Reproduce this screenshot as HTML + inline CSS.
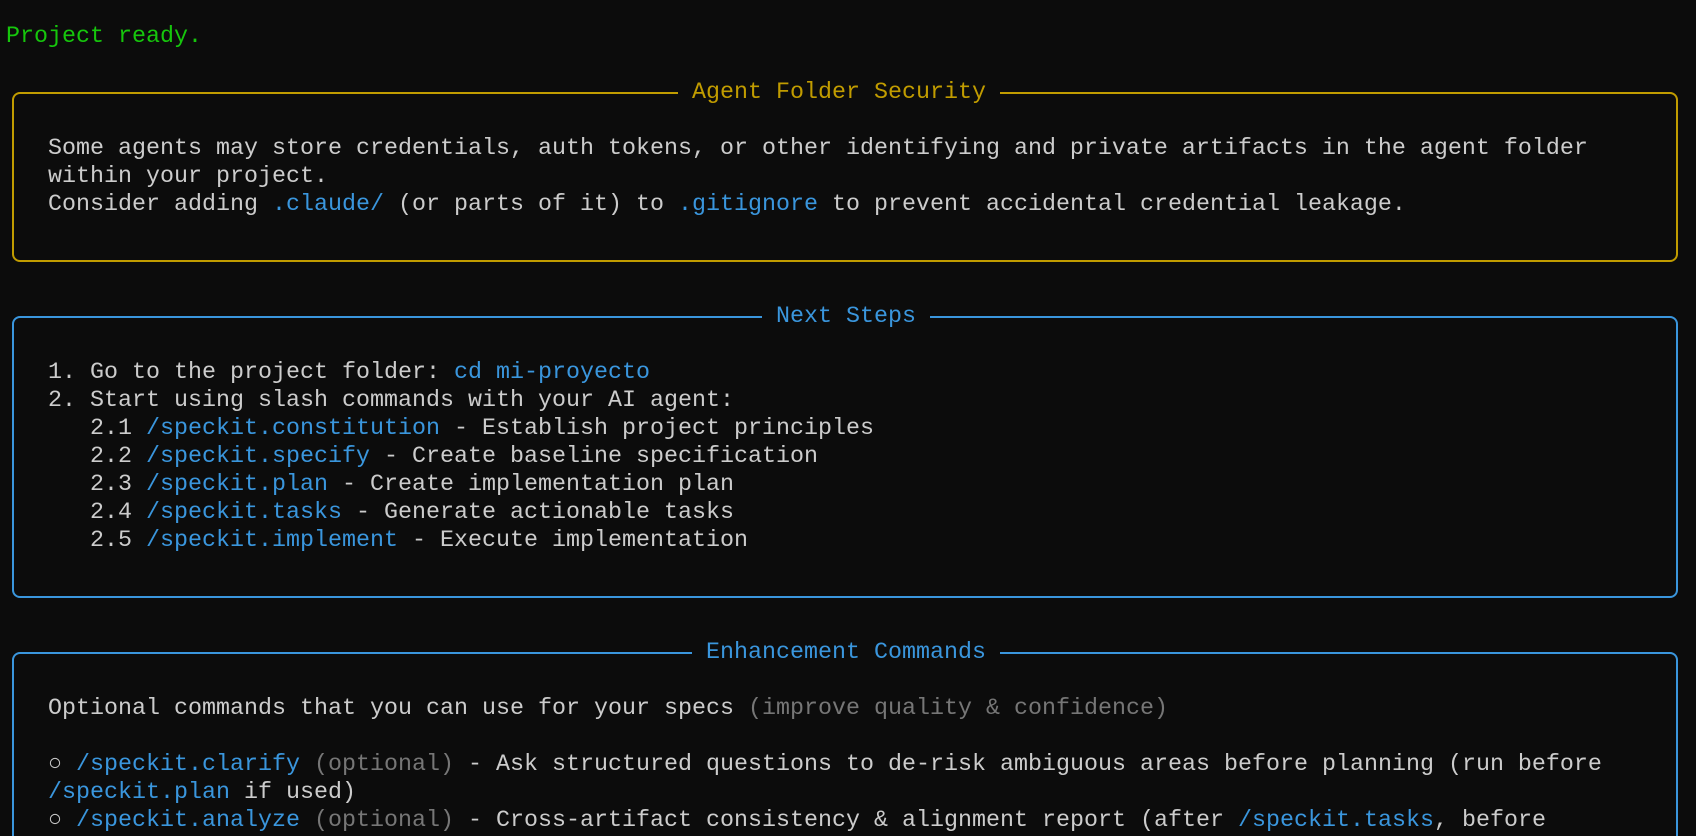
<!DOCTYPE html>
<html><head><meta charset="utf-8"><style>
html,body{margin:0;padding:0;background:#0c0c0c;width:1696px;height:836px;overflow:hidden;position:relative}
pre{position:absolute;left:6px;top:23px;margin:0;font-family:"Liberation Mono",monospace;font-size:23.33px;line-height:28px;color:#cccccc;z-index:2}
.g{color:#16c60c}.y{color:#c19c00}.b{color:#3a96dd}.d{color:#767676}
.t{background:#0c0c0c}
.box{position:absolute;left:12px;width:1666px;border:2px solid;border-radius:8px;box-sizing:border-box;z-index:1}
</style></head><body>
<div class="box" style="border-color:#c19c00;top:92px;height:170px"></div>
<div class="box" style="border-color:#3a96dd;top:316px;height:282px"></div>
<div class="box" style="border-color:#3a96dd;top:652px;height:300px"></div>
<pre><span class="g">Project ready.</span>

                                                <span class="t y"> Agent Folder Security </span>

   Some agents may store credentials, auth tokens, or other identifying and private artifacts in the agent folder
   within your project.
   Consider adding <span class="b">.claude/</span> (or parts of it) to <span class="b">.gitignore</span> to prevent accidental credential leakage.



                                                      <span class="t b"> Next Steps </span>

   1. Go to the project folder: <span class="b">cd mi-proyecto</span>
   2. Start using slash commands with your AI agent:
      2.1 <span class="b">/speckit.constitution</span> - Establish project principles
      2.2 <span class="b">/speckit.specify</span> - Create baseline specification
      2.3 <span class="b">/speckit.plan</span> - Create implementation plan
      2.4 <span class="b">/speckit.tasks</span> - Generate actionable tasks
      2.5 <span class="b">/speckit.implement</span> - Execute implementation



                                                 <span class="t b"> Enhancement Commands </span>

   Optional commands that you can use for your specs <span class="d">(improve quality &amp; confidence)</span>

   ○ <span class="b">/speckit.clarify</span> <span class="d">(optional)</span> - Ask structured questions to de-risk ambiguous areas before planning (run before
   <span class="b">/speckit.plan</span> if used)
   ○ <span class="b">/speckit.analyze</span> <span class="d">(optional)</span> - Cross-artifact consistency &amp; alignment report (after <span class="b">/speckit.tasks</span>, before
   <span class="b">/speckit.implement</span>)
</pre>
</body></html>
